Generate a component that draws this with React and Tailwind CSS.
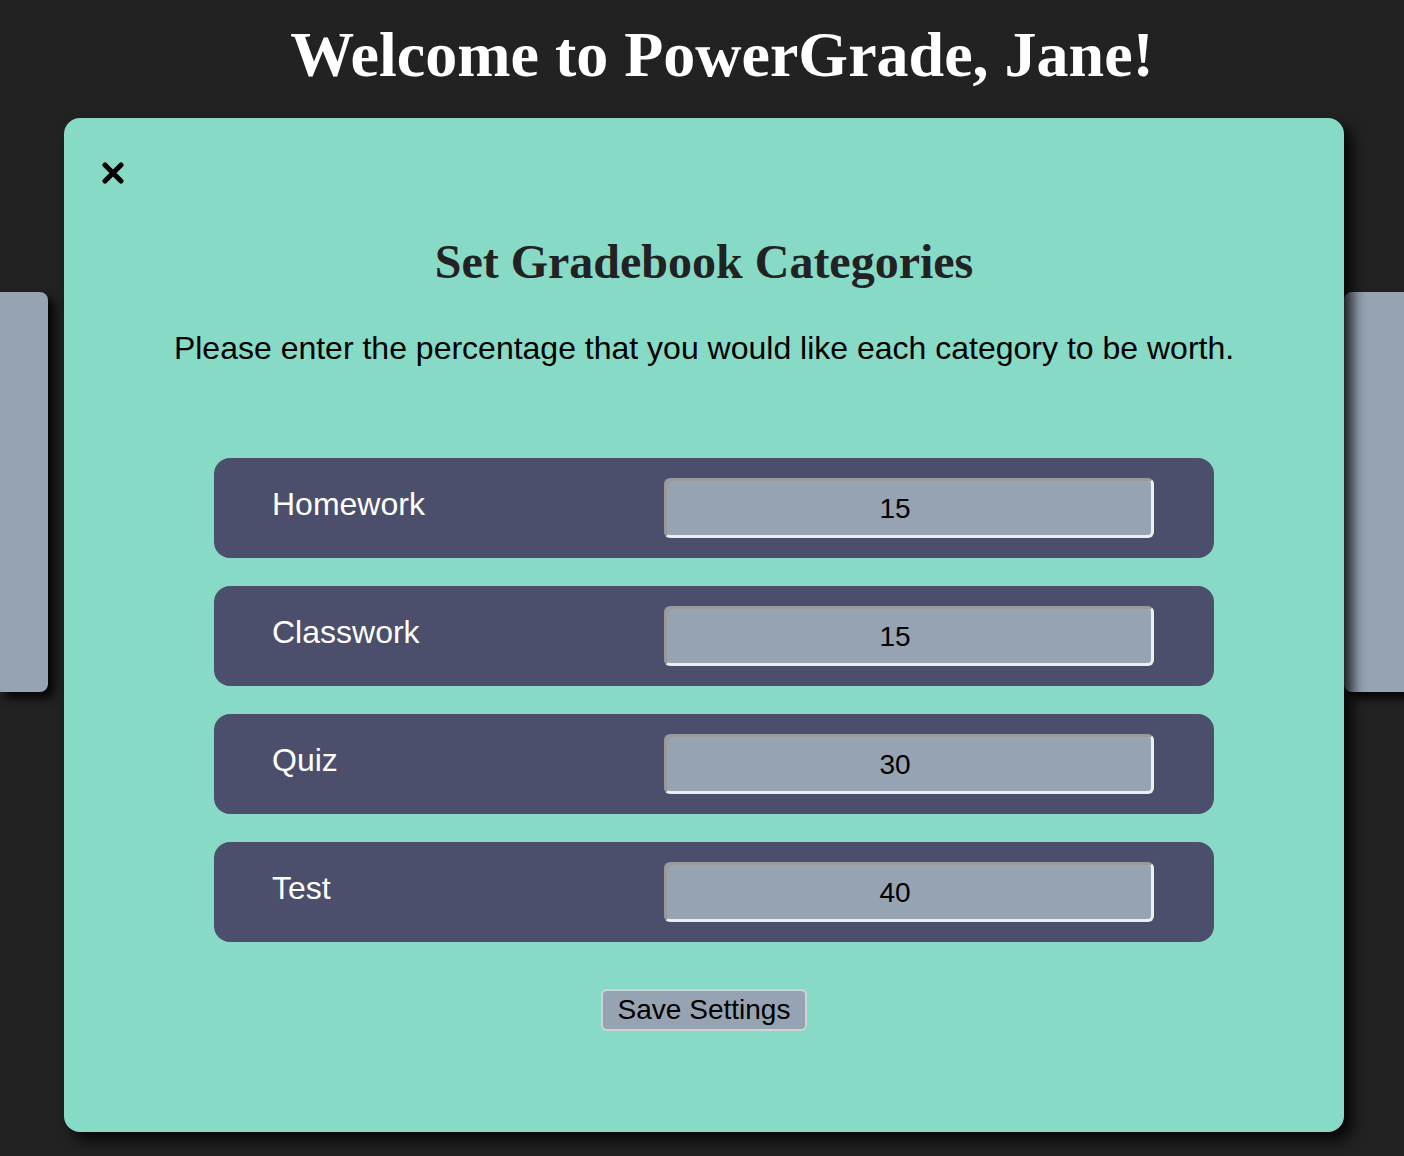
import React from "react";

const rows = [
  { label: "Homework", value: "15" },
  { label: "Classwork", value: "15" },
  { label: "Quiz", value: "30" },
  { label: "Test", value: "40" },
];

export default function App() {
  return (
    <div className="relative w-[1404px] h-[1156px] overflow-hidden bg-[#222222]">
      <h1
        className="text-center text-white font-bold text-[64px] leading-[110px] pl-[40px]"
        style={{ fontFamily: '"Liberation Serif", "Times New Roman", serif' }}
      >
        Welcome to PowerGrade, Jane!
      </h1>
      <div className="flex justify-between mt-[182px]">
        <div className="w-[48px] h-[400px] bg-[#95a3b3] rounded-r-lg shadow-[6px_6px_10px_rgba(0,0,0,0.9)]" />
        <div className="w-[60px] h-[400px] bg-[#95a3b3] rounded-l-lg shadow-[6px_6px_10px_rgba(0,0,0,0.9)]" />
      </div>

      <div
        className="absolute left-[64px] top-[118px] w-[1280px] h-[1014px] bg-[#86dac6] rounded-2xl shadow-[8px_8px_14px_rgba(0,0,0,0.85)] flex flex-col"
        style={{ fontFamily: '"Liberation Sans", Arial, sans-serif' }}
      >
        <div className="pl-[38px] pt-[44px] h-[66px]">
          <svg width="22" height="22" viewBox="0 0 22 22" className="block">
            <path d="M3 3 L19 19 M19 3 L3 19" stroke="#000" strokeWidth="5" strokeLinecap="round" />
          </svg>
        </div>
        <h2
          className="text-center font-bold text-[48px] leading-[56px] text-[#222222] mt-[50px]"
          style={{ fontFamily: '"Liberation Serif", "Times New Roman", serif' }}
        >
          Set Gradebook Categories
        </h2>
        <p className="text-center text-[32px] leading-[36px] text-black mt-[40px]">
          Please enter the percentage that you would like each category to be worth.
        </p>
        <div className="flex flex-col gap-[28px] ml-[150px] w-[1000px] mt-[92px]">
          {rows.map((r) => (
            <div
              key={r.label}
              className="h-[100px] bg-[#4b4f6b] rounded-2xl flex items-center pl-[58px]"
            >
              <div className="w-[392px] text-white text-[32px] leading-[36px] -mt-[8px]">{r.label}</div>
              <div className="w-[490px] h-[60px] bg-[#96a3b2] rounded-[6px] border-[3px] border-t-[#999999] border-l-[#999999] border-b-[#eeeeee] border-r-[#eeeeee] flex items-center justify-center text-[28px] text-black pt-[2px] pr-[28px]">
                {r.value}
              </div>
            </div>
          ))}
        </div>
        <div className="flex justify-center mt-[47px]">
          <button className="h-[42px] px-[15px] bg-[#96a3b2] border-2 border-[#cfd3d6] rounded-[6px] text-[28px] leading-[36px] text-black">
            Save Settings
          </button>
        </div>
      </div>
    </div>
  );
}
